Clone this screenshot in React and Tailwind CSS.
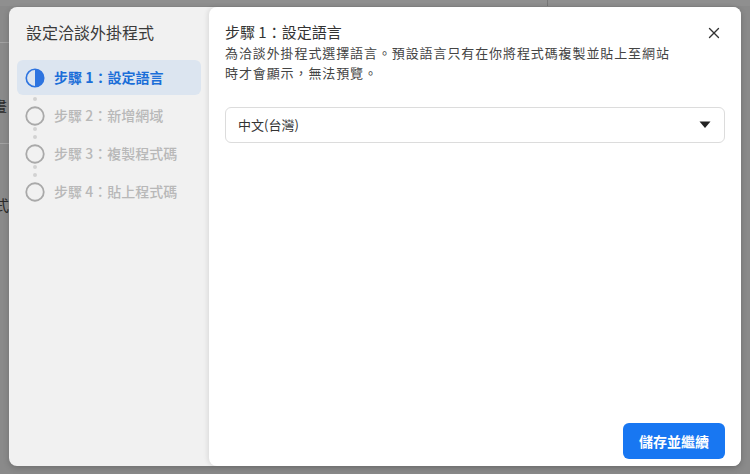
import { X } from 'lucide-react'

const FONT = { fontFamily: '"Noto Sans CJK TC", "Noto Sans", sans-serif' }

const steps = [
  { n: 1, label: '設定語言' },
  { n: 2, label: '新增網域' },
  { n: 3, label: '複製程式碼' },
  { n: 4, label: '貼上程式碼' },
]

const StepIcon = ({ active }) =>
  active ? (
    <svg width="20" height="20" viewBox="0 0 20 20" className="shrink-0">
      <circle cx="10" cy="10" r="8.75" fill="none" stroke="#2d74e0" strokeWidth="1.6" />
      <path d="M10 1.25 A8.75 8.75 0 0 1 10 18.75 Z" fill="#2d74e0" />
    </svg>
  ) : (
    <svg width="20" height="20" viewBox="0 0 20 20" className="shrink-0">
      <circle cx="10" cy="10" r="8.75" fill="none" stroke="#a9a9a9" strokeWidth="1.8" />
    </svg>
  )

export default function App() {
  return (
    <div className="relative w-[750px] h-[474px] bg-[#8a8a8a] overflow-hidden" style={FONT}>
      {/* page behind the overlay */}
      <div className="absolute inset-x-0 top-0 h-[6px] bg-[#8f8f8f]" />
      <div className="absolute top-0 left-[547px] w-px h-[6px] bg-[#777]" />
      <div className="absolute left-0 top-[42px] w-[12px] h-px bg-[#a2a2a2]" />
      <div className="absolute left-0 top-[143px] w-[12px] h-px bg-[#a2a2a2]" />
      <div className="absolute left-[-8px] top-[95px] text-[15px] text-[#2a2a2a]">畫</div>
      <div className="absolute left-[-6px] top-[194px] text-[15px] text-[#2a2a2a]">式</div>

      {/* modal */}
      <div className="absolute left-[9px] top-[7px] w-[732px] h-[459px] flex rounded-[8px] bg-[#f1f1f1] shadow-[0_2px_6px_rgba(0,0,0,0.2)]">
        <div className="w-[200px] shrink-0 pt-[15px]">
          <div className="px-[17px] text-[16px] leading-[20px] text-[#3a3a3a]">設定洽談外掛程式</div>
          <div className="relative mt-[18px] px-[8px] flex flex-col gap-[3px]">
            {[29, 37, 67, 75, 105, 113].map((t) => (
              <div key={t} className="absolute left-[24px] w-[4px] h-[4px] rounded-full bg-[#d2d2d2]" style={{ top: t }} />
            ))}
            {steps.map((s) => {
              const active = s.n === 1
              return (
                <div
                  key={s.n}
                  className={`relative h-[35px] flex items-center gap-[9px] px-[8px] rounded-[6px] ${
                    active ? 'bg-[#dce5f0]' : ''
                  }`}
                >
                  <StepIcon active={active} />
                  <span
                    className={`text-[14px] ${active ? 'text-[#1b6ed8] font-bold' : 'text-[#b8b8b8] font-medium'}`}
                  >
                    步驟 {s.n}：{s.label}
                  </span>
                </div>
              )
            })}
          </div>
        </div>

        <div className="flex-1 flex flex-col bg-white rounded-[8px] shadow-[-2px_0_4px_rgba(0,0,0,0.08)] px-[16px] pt-[15px] pb-[7px]">
          <div className="flex items-start justify-between">
            <div>
              <div className="text-[15px] leading-[20px] text-[#333]">步驟 1：設定語言</div>
              <div className="mt-[1px] w-[458px] text-[13px] leading-[20px] tracking-[0.9px] text-[#444]">
                為洽談外掛程式選擇語言。預設語言只有在你將程式碼複製並貼上至網站時才會顯示，無法預覽。
              </div>
            </div>
            <X size={18} strokeWidth={1.8} className="mt-[2px] mr-[2px] text-[#333]" />
          </div>

          <div className="mt-[24px] h-[36px] flex items-center justify-between border border-[#dcdcdc] rounded-[6px] pl-[12px] pr-[13px]">
            <span className="text-[13px] text-[#333]">中文(台灣)</span>
            <svg width="12" height="8" viewBox="0 0 12 8">
              <path d="M0.5 0.5 L11.5 0.5 L6 7 Z" fill="#222" />
            </svg>
          </div>

          <div className="flex-1" />

          <div className="flex justify-end">
            <button className="h-[36px] w-[102px] rounded-[6px] bg-[#1877f2] text-white text-[14px] font-bold">
              儲存並繼續
            </button>
          </div>
        </div>
      </div>
    </div>
  )
}
